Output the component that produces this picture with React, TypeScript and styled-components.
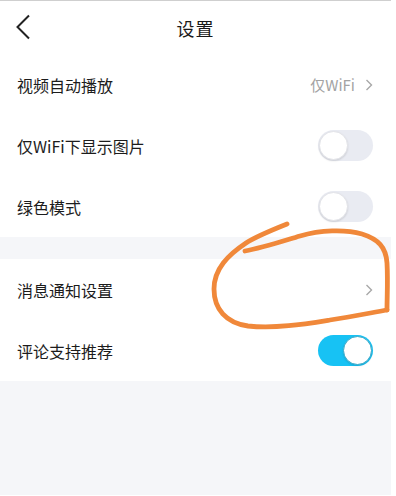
import styled, { createGlobalStyle } from "styled-components";

const GlobalStyle = createGlobalStyle`
  html, body {
    margin: 0;
    padding: 0;
    background: #ffffff;
  }
  body {
    font-family: "Noto Sans CJK SC", "Noto Sans", sans-serif;
  }
`;

const Screen = styled.div`
  position: relative;
  width: 391px;
  height: 495px;
  background: #f5f6f9;
  border-top: 1px solid #cfcfcf;
  box-sizing: border-box;
  display: flex;
  flex-direction: column;
  overflow: hidden;
`;

const Header = styled.div`
  height: 53px;
  background: #fff;
  display: flex;
  align-items: center;
  justify-content: center;
  position: relative;
`;

const BackButton = styled.div`
  position: absolute;
  left: 15px;
  top: 12px;
  width: 20px;
  height: 28px;
  display: flex;
  align-items: center;
`;

const Title = styled.div`
  font-size: 18px;
  color: #1a1a1a;
  letter-spacing: 1px;
`;

const Group = styled.div`
  background: #fff;
  display: flex;
  flex-direction: column;
`;

const Gap = styled.div`
  height: 22px;
`;

const Row = styled.div`
  height: 61px;
  padding: 0 18px 0 17px;
  display: flex;
  align-items: center;
  justify-content: space-between;
`;

const Label = styled.div`
  font-size: 16px;
  color: #1c1c1c;
`;

const Extra = styled.div`
  display: flex;
  align-items: center;
  gap: 10px;
  font-size: 15px;
  color: #a3a3a3;
`;

const Track = styled.div<{ $on?: boolean }>`
  width: 55px;
  height: 31px;
  border-radius: 16px;
  background: ${(p) => (p.$on ? "#17c2f4" : "#e9ebf2")};
  position: relative;
  box-sizing: border-box;
`;

const Knob = styled.div<{ $on?: boolean }>`
  position: absolute;
  top: 1px;
  left: ${(p) => (p.$on ? "25px" : "1px")};
  width: 29px;
  height: 29px;
  border-radius: 50%;
  background: #fff;
  box-sizing: border-box;
  border: 1px solid ${(p) => (p.$on ? "#36a9c9" : "#e2e3e8")};
  box-shadow: 0 1px 2px rgba(0, 0, 0, 0.12);
`;

const Scribble = styled.svg`
  position: absolute;
  left: 0;
  top: 0;
  pointer-events: none;
`;

function Chevron() {
  return (
    <svg width="8" height="12" viewBox="0 0 8 12">
      <path d="M1.5 1 L6.5 6 L1.5 11" fill="none" stroke="#a8a8a8" strokeWidth="1.4" />
    </svg>
  );
}

function Toggle({ on }: { on?: boolean }) {
  return (
    <Track $on={on}>
      <Knob $on={on} />
    </Track>
  );
}

function App() {
  return (
    <>
      <GlobalStyle />
      <Screen>
        <Header>
          <BackButton>
            <svg width="16" height="26" viewBox="0 0 16 26">
              <path d="M14 1.5 L2.5 13 L14 24.5" fill="none" stroke="#222" strokeWidth="2" />
            </svg>
          </BackButton>
          <Title>设置</Title>
        </Header>
        <Group>
          <Row>
            <Label>视频自动播放</Label>
            <Extra>
              仅WiFi
              <Chevron />
            </Extra>
          </Row>
          <Row>
            <Label>仅WiFi下显示图片</Label>
            <Toggle />
          </Row>
          <Row>
            <Label>绿色模式</Label>
            <Toggle />
          </Row>
        </Group>
        <Gap />
        <Group>
          <Row>
            <Label>消息通知设置</Label>
            <Extra>
              <Chevron />
            </Extra>
          </Row>
          <Row>
            <Label>评论支持推荐</Label>
            <Toggle on />
          </Row>
        </Group>
        <Scribble width="391" height="495" viewBox="0 0 391 495">
          <path
            d="M287 223 C272 229 255 236 246 242 C228 254 214 268 214 288 C214 308 226 322 248 325 C275 328 305 323 330 319 C350 316 370 312 387 309"
            fill="none"
            stroke="#f0883a"
            strokeWidth="4.8"
            strokeLinecap="round"
          />
          <path
            d="M245 250 C262 247 280 241 300 235 C320 229 345 228 362 233 C378 238 386 246 387 262 C388 280 387 296 387 309"
            fill="none"
            stroke="#f0883a"
            strokeWidth="4.8"
            strokeLinecap="round"
          />
        </Scribble>
      </Screen>
    </>
  );
}

export default App;
